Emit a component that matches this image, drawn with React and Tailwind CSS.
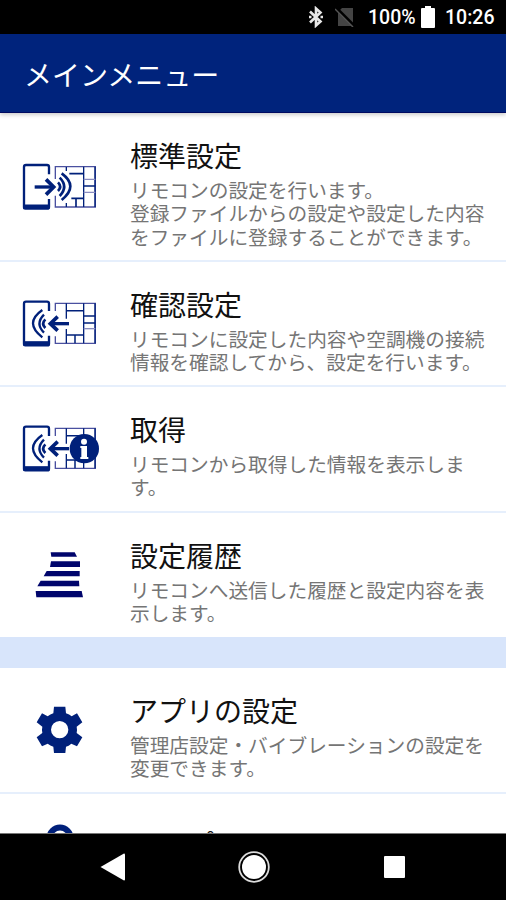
const NAVY = "#00207a";

function PhoneOutline() {
  return (
    <g fill="none" stroke={NAVY}>
      <path d="M147 102V80q0-6-6-6H78q-6 0-6 6v121q0 4 4 4h66q5 0 5-5v-24" strokeWidth="7" />
      <path d="M70 199h79" strokeWidth="13" />
    </g>
  );
}

function SendIcon() {
  return (
    <svg viewBox="60 68 240 144" className="h-12 w-20">
      <PhoneOutline />
      <g fill="none" stroke={NAVY}>
        <path d="M104 140h52" strokeWidth="10" />
        <path d="M138 117l23 23-23 23" strokeWidth="11" />
        <path d="M174 126q13 13 0 26" strokeWidth="8" />
        <path d="M179 112q27 27 0 55" strokeWidth="8" />
        <path d="M185 99q52 38 0 80" strokeWidth="8" />
        <path d="M166 116V79h120v121H166v-34" strokeWidth="4" stroke="#4a50a0" />
        <path d="M251 79v121M199 80v12M199 188v12M285 79v121" strokeWidth="4" />
        <path d="M208 100h43M214 174h37M228 174v26M251 137h35" strokeWidth="5" />
        <path d="M251 117h35M251 156h35" strokeWidth="4" stroke="#8a8cc0" />
      </g>
    </svg>
  );
}

function ReceiveIcon({ info }) {
  return (
    <svg viewBox="60 69 240 144" className="h-12 w-20">
      <PhoneOutline />
      <g fill="none" stroke={NAVY}>
        <path d="M136 127q-13 13 0 26" strokeWidth="8" />
        <path d="M132 113q-27 27 0 54" strokeWidth="7" />
        <path d="M127 99q-56 39 0 82" strokeWidth="7" />
        <path d="M152 140h55" strokeWidth="10" />
        <path d="M173 119l-22 21 22 21" strokeWidth="11" />
        <path d="M199 79h-33v23M166 178v21h33M199 79h87v120h-87" strokeWidth="4" stroke="#4a50a0" />
        <path d="M199 79v46M199 156v43M251 79v120M285 79v120" strokeWidth="4" />
        <path d="M199 101h52M199 174h52M225 174v25M251 117h35M251 138h35" strokeWidth="4.500" />
        <path d="M251 155h35" strokeWidth="4" stroke="#8a8cc0" />
      </g>
      {info && (
        <g>
          <circle cx="253" cy="140" r="44" fill={NAVY} />
          <circle cx="252" cy="119" r="9" fill="white" />
          <path d="M241 132h20v33h4v6h-24v-6h3v-27h-3z" fill="white" />
        </g>
      )}
    </svg>
  );
}

function HistoryIcon() {
  return (
    <svg viewBox="60 62 240 144" className="h-12 w-20" fill="#00056c">
      <path d="M152 66h72l7 13h-77z" />
      <path d="M153 93h87v17h-90z" />
      <path d="M140 122h99v16H131z" />
      <path d="M122 151h115l1 17H112z" />
      <path d="M107 182h138l4 19H109z" />
    </svg>
  );
}

function GearIcon() {
  return (
    <svg viewBox="60 48 240 144" className="h-12 w-20">
      <path
        fill={NAVY}
        fillRule="evenodd"
        d="M162 50h34l2 20q10 3 17 9l16-9 16 27-17 13q2 9 0 19l17 13-16 27-17-8q-8 7-16 9l-2 19h-34l-2-19q-9-3-17-9l-17 8-16-27 17-13q-2-10 0-19l-17-13 16-27 17 9q8-6 17-9zM179 93a26 26 0 1 0 0 52a26 26 0 1 0 0-52z"
      />
    </svg>
  );
}

function HelpIcon() {
  return (
    <svg viewBox="0 0 80 48" className="h-12 w-20" fill="none" stroke={NAVY}>
      <path d="M29.500 15a10.500 10.500 0 0 1 21 0q0 5-5 8t-5.500 10" strokeWidth="6" />
      <circle cx="40" cy="42" r="4" fill={NAVY} stroke="none" />
    </svg>
  );
}

function MenuRow({ icon, title, lines, className }) {
  return (
    <section className={`flex shrink-0 items-center border-[#e6effc] ${className}`}>
      <div className="flex w-[130px] shrink-0 justify-start pl-5">{icon}</div>
      <div className="min-w-0 self-start pt-[21.500px]">
        <h2 className="text-[28px] leading-[40px] text-[#111]">{title}</h2>
        {lines.length > 0 && (
          <p className="pt-[3.500px] text-[19.700px] leading-[23.300px] whitespace-nowrap text-[#757575]">
            {lines.map((line) => (
              <span key={line} className="block">{line}</span>
            ))}
          </p>
        )}
      </div>
    </section>
  );
}

function StatusBar() {
  return (
    <div className="flex h-[34px] shrink-0 items-center justify-end bg-black pr-[11px] font-[Roboto,sans-serif] text-[19.500px] font-medium text-white">
      <svg viewBox="0 0 14 22" className="h-[22px] w-[14px]" fill="none" stroke="#e8e8e8" strokeWidth="2.600">
        <path d="M1 5.500l10.500 10-4.500 4V2.500l4.500 4L1 16.500" />
        <path d="M0 11h2.500M11.500 11H14" />
      </svg>
      <svg viewBox="0 0 20 20" className="ml-3 h-5 w-5">
        <path d="M3 5l4-4h11v18H3z" fill="#444" />
        <path d="M1 1l18 18" stroke="#000" strokeWidth="3.500" />
        <path d="M0 2l18 18" stroke="#555" strokeWidth="1.500" />
      </svg>
      <span className="mt-0.5 ml-[13px] w-[49px] whitespace-nowrap">100%</span>
      <svg viewBox="0 0 14 22" className="ml-[4px] h-[22px] w-[14px]" fill="#fff">
        <path d="M4 0h6v2h3q1 0 1 1v18q0 1-1 1H1q-1 0-1-1V3q0-1 1-1h3z" />
      </svg>
      <span className="mt-0.5 ml-[10px] w-[50px] whitespace-nowrap">10:26</span>
    </div>
  );
}

function NavBar() {
  return (
    <nav className="flex h-[67px] shrink-0 items-center border-t border-[#777] bg-black pl-[100px]">
      <svg viewBox="0 0 25 28" className="h-7 w-[25px]" fill="#fff">
        <path d="M0.500 14L24 0.500q1 0 1 1v25q0 1-1 1z" />
      </svg>
      <svg viewBox="0 0 32 32" className="ml-[112.500px] h-8 w-8">
        <circle cx="16" cy="16" r="14.800" fill="none" stroke="#ddd" strokeWidth="1.800" />
        <circle cx="16" cy="16" r="12" fill="#fff" />
      </svg>
      <div className="ml-[114px] h-[22px] w-[21.500px] rounded-[1px] bg-white" />
    </nav>
  );
}

export default function App() {
  return (
    <div className="flex h-[900px] w-[506px] flex-col overflow-hidden bg-white font-['Noto_Sans_CJK_JP',sans-serif]">
      <StatusBar />
      <header className="z-10 flex h-[79px] shrink-0 items-center border-b border-[#000a60] bg-[#00237c] pl-[24px] shadow-[0_2px_4px_rgba(0,0,0,0.2)]">
        <h1 className="pt-px text-[28px] leading-10 text-white">メインメニュー</h1>
      </header>
      <main className="flex min-h-0 flex-1 flex-col overflow-hidden">
        <MenuRow
          icon={<SendIcon />}
          title="標準設定"
          lines={[
            "リモコンの設定を行います。",
            "登録ファイルからの設定や設定した内容",
            "をファイルに登録することができます。"
          ]}
          className="h-[149px] border-b-2"
        />
        <MenuRow
          icon={<ReceiveIcon />}
          title="確認設定"
          lines={["リモコンに設定した内容や空調機の接続", "情報を確認してから、設定を行います。"]}
          className="h-[125px] border-b-2"
        />
        <MenuRow
          icon={<ReceiveIcon info />}
          title="取得"
          lines={["リモコンから取得した情報を表示しま", "す。"]}
          className="h-[126px] border-b-2"
        />
        <MenuRow
          icon={<HistoryIcon />}
          title="設定履歴"
          lines={["リモコンへ送信した履歴と設定内容を表", "示します。"]}
          className="h-[124px]"
        />
        <div className="h-[31px] shrink-0 bg-[#d8e5fb]" />
        <MenuRow
          icon={<GearIcon />}
          title="アプリの設定"
          lines={["管理店設定・バイブレーションの設定を", "変更できます。"]}
          className="h-[125.500px] border-b-2"
        />
        <MenuRow
          icon={<HelpIcon />}
          title={<span className="block pt-2">ヘルプ</span>}
          lines={[]}
          className="h-[106px]"
        />
      </main>
      <NavBar />
    </div>
  );
}
